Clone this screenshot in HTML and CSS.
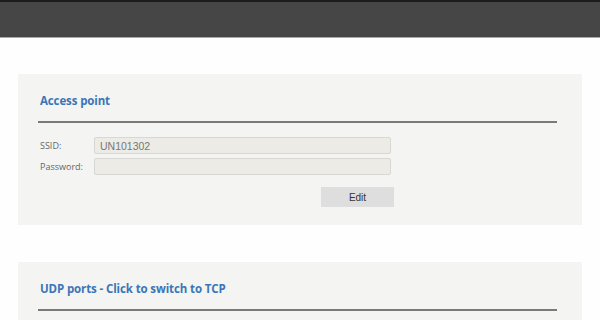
FILE: index.html
```html
<!DOCTYPE html>
<html>
<head>
  <title>Settings</title>
  <link rel="stylesheet" href="styles.css">
</head>
<body>

  <div class="topbar"></div>

  <div class="content">
    <div class="panel">
      <h2 class="panel-title">Access point</h2>
      <div class="rule"></div>
      <div class="form">
        <label class="field-label">SSID:</label>
        <input class="field" type="text" value="UN101302" disabled>
        <label class="field-label">Password:</label>
        <input class="field" type="password" value="" disabled>
        <button class="edit-btn">Edit</button>
      </div>
    </div>

    <div class="panel">
      <h2 class="panel-title link">UDP ports - Click to switch to TCP</h2>
      <div class="rule"></div>
    </div>
  </div>

</body>
</html>
```

FILE: styles.css
```css
body {
  margin: 0;
  background: #fefefe;
  font-family: "Liberation Sans", Arial, sans-serif;
}

.topbar {
  height: 35px;
  background: #464646;
  border-top: 2px solid #1c1c1c;
  border-bottom: 1px solid #a8a8a8;
}

.content {
  padding: 36px 18px 0;
  display: flex;
  flex-direction: column;
  gap: 37px;
}

.panel {
  background: #f4f4f3;
  padding: 19px 25px 18px 20px;
}

.panel-title {
  margin: 0 0 0 2px;
  font-family: "Open Sans", sans-serif;
  font-size: 11.5px;
  line-height: 16px;
  font-weight: bold;
  color: #3a76b6;
  letter-spacing: -0.12px;
}

.rule {
  height: 2px;
  background: #7a7a7a;
  margin-top: 12px;
}

.form {
  display: grid;
  grid-template-columns: 54px 300px;
  row-gap: 4px;
  align-items: center;
  margin-top: 14px;
  margin-left: 2px;
}

.field-label {
  font-family: "Open Sans", sans-serif;
  font-size: 9px;
  color: #666;
}

.field {
  box-sizing: border-box;
  width: 297px;
  height: 17px;
  margin: 0;
  padding: 0 5px;
  background: #ecebe6;
  border: 1px solid #d9d7d1;
  border-radius: 2px;
  font-family: "Liberation Sans", Arial, sans-serif;
  font-size: 10.5px;
  color: #777;
}

.edit-btn {
  grid-column: 2;
  justify-self: end;
  width: 73px;
  height: 20px;
  margin-top: 8px;
  background: #dedede;
  border: none;
  font-family: "Liberation Sans", Arial, sans-serif;
  font-size: 10px;
  color: #333;
}
```
